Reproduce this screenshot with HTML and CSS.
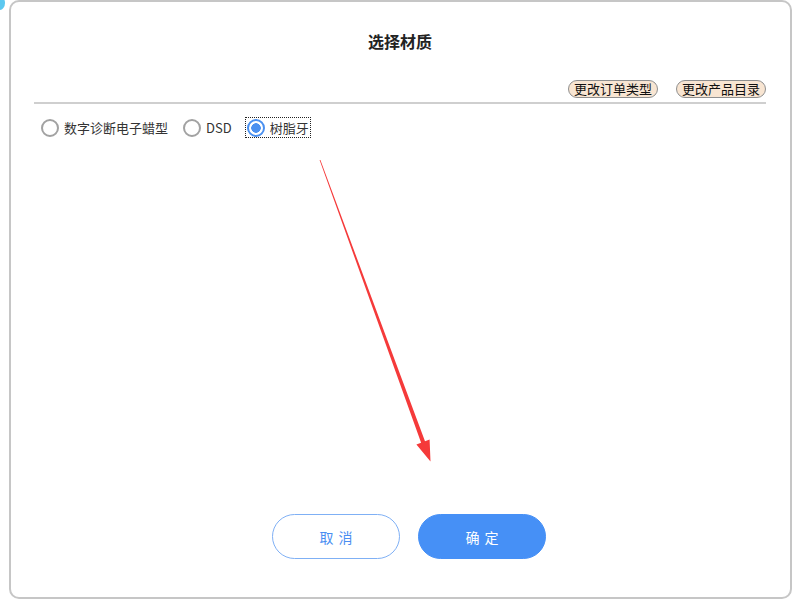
FILE: index.html
```html
<!DOCTYPE html>
<html lang="zh-CN">
<head>
    <meta charset="UTF-8">
    <meta name="viewport" content="width=device-width, initial-scale=1.0">
    <title>选择材质</title>
    <link rel="stylesheet" href="styles.css">
</head>
<body>
    <div class="corner-dot"></div>
    <div class="dialog">
        <h2 class="title">选择材质</h2>

        <div class="toolbar">
            <button class="tag-btn">更改订单类型</button>
            <button class="tag-btn">更改产品目录</button>
        </div>

        <div class="radio-row">
            <label class="radio-item">
                <input type="radio" name="material" value="wax">
                <span>数字诊断电子蜡型</span>
            </label>
            <label class="radio-item">
                <input type="radio" name="material" value="dsd">
                <span>DSD</span>
            </label>
            <label class="radio-item focused">
                <input type="radio" name="material" value="resin" checked>
                <span>树脂牙</span>
            </label>
        </div>

        <div class="spacer"></div>

        <div class="footer">
            <button class="btn btn-cancel">取消</button>
            <button class="btn btn-ok">确定</button>
        </div>

        <!-- 标注箭头 -->
        <svg class="arrow" width="800" height="600" viewBox="0 0 800 600">
            <path d="M319.6,160 L320.4,160 L425,441.3 L429.6,439.6 L430.5,461.5 L416.4,444.4 L421.1,442.7 Z" fill="#f53a3a"/>
        </svg>
    </div>
</body>
</html>
```

FILE: styles.css
```css
body {
    margin: 0;
    background-color: #fff;
    font-family: "Microsoft YaHei", "Noto Sans CJK SC", "Noto Sans", sans-serif;
    color: #333;
    width: 800px;
    height: 600px;
    overflow: hidden;
    position: relative;
}
.corner-dot {
    position: absolute;
    left: -6px;
    top: -4px;
    width: 11px;
    height: 14px;
    border-radius: 50%;
    background-color: #5cc8f0;
}
.dialog {
    box-sizing: border-box;
    margin-left: 9px;
    margin-top: 0;
    width: 783px;
    height: 599px;
    border: 2px solid #c6c6c6;
    border-radius: 10px;
    background-color: #fff;
    padding: 0 24px 38px 23px;
    display: flex;
    flex-direction: column;
}
.title {
    margin: 29px 0 0 0;
    text-align: center;
    font-size: 16px;
    font-weight: bold;
    color: #222;
    line-height: 20px;
}
.toolbar {
    margin-top: 29px;
    display: flex;
    justify-content: flex-end;
    gap: 18px;
    padding-bottom: 4px;
    border-bottom: 2px solid #cfcfcf;
}
.tag-btn {
    font-family: inherit;
    font-size: 13px;
    line-height: 16px;
    color: #111;
    background-color: #f8e5d2;
    border: 1px solid #8f8f8f;
    border-radius: 9px;
    padding: 0 5px;
    height: 18px;
    cursor: pointer;
}
.radio-row {
    margin-top: 13px;
    padding-left: 5px;
    display: flex;
    align-items: center;
    gap: 11px;
}
.radio-item {
    display: flex;
    align-items: center;
    gap: 5px;
    font-size: 13px;
    color: #333;
    height: 19px;
    padding: 0 1px;
    border: 1px solid transparent;
}
.radio-item.focused {
    border: 1px dotted #222;
}
.radio-item input {
    appearance: none;
    -webkit-appearance: none;
    margin: 0;
    width: 18px;
    height: 18px;
    border: 2px solid #a2a2a2;
    border-radius: 50%;
    box-sizing: border-box;
    background-color: #fff;
}
.radio-item input:checked {
    border-color: #4a90f0;
    background: radial-gradient(circle, #4a90f0 0 4.5px, #fff 5px);
}
.spacer {
    flex: 1;
}
.footer {
    display: flex;
    justify-content: center;
    gap: 18px;
    padding-left: 18px;
}
.btn {
    width: 128px;
    height: 45px;
    border-radius: 23px;
    font-family: inherit;
    font-size: 14px;
    letter-spacing: 5px;
    text-indent: 5px;
    cursor: pointer;
}
.btn-cancel {
    background-color: #fff;
    color: #4a8ef2;
    border: 1px solid #7fb0f5;
}
.btn-ok {
    background-color: #4690f6;
    color: #fff;
    border: 1px solid #4690f6;
}
.arrow {
    position: absolute;
    left: 0;
    top: 0;
    pointer-events: none;
}
```
